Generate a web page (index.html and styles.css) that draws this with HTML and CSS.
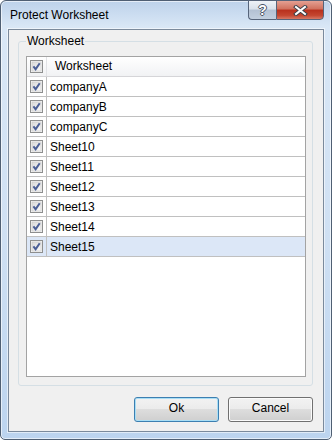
FILE: index.html
```html
<!DOCTYPE html>
<html>
<head>
  <meta charset="UTF-8" />
  <title>Protect Worksheet</title>
  <link rel="stylesheet" href="styles.css">
</head>
<body>
  <svg class="defs" width="0" height="0">
    <defs>
      <linearGradient id="box-fill" x1="0" y1="0" x2="1" y2="1">
        <stop offset="0" stop-color="#d9d9d9" />
        <stop offset="1" stop-color="#fbfbfb" />
      </linearGradient>
      <symbol id="check" viewBox="0 0 13 13">
        <rect x="0.5" y="0.5" width="12" height="12" fill="#f4f4f4" stroke="#8e8f8f" />
        <rect x="2" y="2" width="9" height="9" fill="url(#box-fill)" stroke="#c6c6c6" stroke-width="0.6" />
        <path d="M3.4 6.4 L5.6 9.2 L9.7 3.2" fill="none" stroke="#4a5e96" stroke-width="2" />
      </symbol>
    </defs>
  </svg>

  <div class="window">
    <div class="titlebar">
      <span class="title">Protect Worksheet</span>
      <div class="caption-buttons">
        <span class="cap-btn help">?</span>
        <span class="cap-btn close">
          <svg width="15" height="11" viewBox="0 0 15 11">
            <path d="M3 2 L12 9 M12 2 L3 9" stroke="#3a3f48" stroke-width="4" stroke-linecap="square" />
            <path d="M3 2 L12 9 M12 2 L3 9" stroke="#fff" stroke-width="2" stroke-linecap="square" />
          </svg>
        </span>
      </div>
    </div>

    <div class="client">
      <fieldset class="group">
        <legend>Worksheet</legend>
        <div class="grid">
          <div class="grid-header">
            <span class="cell-check"><svg class="checkbox"><use href="#check" /></svg></span>
            <span class="cell-name">Worksheet</span>
          </div>
          <div class="row">
            <span class="cell-check"><svg class="checkbox"><use href="#check" /></svg></span>
            <span class="cell-name">companyA</span>
          </div>
          <div class="row">
            <span class="cell-check"><svg class="checkbox"><use href="#check" /></svg></span>
            <span class="cell-name">companyB</span>
          </div>
          <div class="row">
            <span class="cell-check"><svg class="checkbox"><use href="#check" /></svg></span>
            <span class="cell-name">companyC</span>
          </div>
          <div class="row">
            <span class="cell-check"><svg class="checkbox"><use href="#check" /></svg></span>
            <span class="cell-name">Sheet10</span>
          </div>
          <div class="row">
            <span class="cell-check"><svg class="checkbox"><use href="#check" /></svg></span>
            <span class="cell-name">Sheet11</span>
          </div>
          <div class="row">
            <span class="cell-check"><svg class="checkbox"><use href="#check" /></svg></span>
            <span class="cell-name">Sheet12</span>
          </div>
          <div class="row">
            <span class="cell-check"><svg class="checkbox"><use href="#check" /></svg></span>
            <span class="cell-name">Sheet13</span>
          </div>
          <div class="row">
            <span class="cell-check"><svg class="checkbox"><use href="#check" /></svg></span>
            <span class="cell-name">Sheet14</span>
          </div>
          <div class="row selected">
            <span class="cell-check"><svg class="checkbox"><use href="#check" /></svg></span>
            <span class="cell-name">Sheet15</span>
          </div>
        </div>
      </fieldset>

      <div class="actions">
        <button class="btn default">Ok</button>
        <button class="btn">Cancel</button>
      </div>
    </div>
  </div>
</body>
</html>
```

FILE: styles.css
```css
* {
  box-sizing: border-box;
}
body {
  margin: 0;
  font-family: "Liberation Sans", Arial, sans-serif;
  font-size: 12px;
  color: #000;
  background: #fff;
}
.defs {
  position: absolute;
  width: 0;
  height: 0;
}

/* window frame */
.window {
  width: 332px;
  height: 440px;
  display: flex;
  flex-direction: column;
  padding: 0 7px 7px;
  border: 1px solid #4f5f73;
  border-radius: 6px 6px 5px 5px;
  background: linear-gradient(#bdd2ea 0, #d9e7f6 26px, #cfe0f3 55%, #bcd4ef 100%);
  box-shadow: inset 0 0 0 1px rgba(255, 255, 255, 0.6);
}
.titlebar {
  height: 28px;
  display: flex;
  align-items: flex-start;
  justify-content: space-between;
}
.title {
  padding: 6px 0 0 2px;
  line-height: 16px;
}
.caption-buttons {
  display: flex;
  margin-top: -1px;
}
.cap-btn {
  height: 20px;
  display: flex;
  align-items: center;
  justify-content: center;
  border: 1px solid #56647a;
}
.help {
  width: 28px;
  border-right: 0;
  border-radius: 0 0 0 4px;
  background: linear-gradient(#eef2f7 0, #d9e1eb 45%, #b3c1d3 50%, #c2cfdf 100%);
  color: #fff;
  font-weight: bold;
  font-size: 14px;
  line-height: 14px;
  text-shadow: 1px 0 0 #4b5566, -1px 0 0 #4b5566, 0 1px 0 #4b5566, 0 -1px 0 #4b5566;
}
.close {
  width: 48px;
  border-radius: 0 0 4px 0;
  background: linear-gradient(#e4a092 0, #d0705d 45%, #b8301d 50%, #c44630 80%, #d67865 100%);
}

/* client area */
.client {
  flex: 1;
  display: flex;
  flex-direction: column;
  background: #f0f0f0;
  border: 1px solid #7b8a9c;
  box-shadow: 0 0 0 1px rgba(255, 255, 255, 0.55);
}
.group {
  margin: 4px 10px 0 9px;
  padding: 7px 6px 8px 7px;
  border: 1px solid #d5dfe5;
  border-radius: 3px;
  min-width: 0;
}
.group legend {
  padding: 0 1px;
  line-height: 15px;
}

/* checked list */
.grid {
  height: 321px;
  border: 1px solid #a3a3a3;
  background: #fff;
}
.grid-header,
.row {
  display: flex;
  height: 20px;
}
.grid-header {
  border-bottom: 1px solid #d5d5d8;
  background: linear-gradient(#ffffff, #f1f2f4);
}
.row {
  border-bottom: 1px solid #c0c0c0;
}
.row.selected {
  background: #dce7f7;
}
.cell-check {
  width: 20px;
  display: flex;
  align-items: center;
  padding-left: 3px;
  border-right: 1px solid #c0c0c0;
}
.grid-header .cell-check {
  border-right-color: #e2e3e6;
}
.checkbox {
  width: 13px;
  height: 13px;
  display: block;
}
.cell-name {
  padding: 1px 0 0 3px;
  line-height: 18px;
}
.grid-header .cell-name {
  padding: 0 0 0 8px;
  line-height: 19px;
}

/* buttons */
.actions {
  display: flex;
  justify-content: flex-end;
  gap: 9px;
  margin: 11px 10px 0 0;
}
.btn {
  width: 85px;
  height: 25px;
  padding: 0 0 3px;
  font: 12px "Liberation Sans", Arial, sans-serif;
  color: #000;
  border: 1px solid #707070;
  border-radius: 3px;
  background: linear-gradient(#f2f2f2 0, #ebebeb 50%, #dddddd 50%, #cfcfcf 100%);
  box-shadow: inset 0 0 0 1px #fbfbfb;
}
.btn.default {
  border-color: #3c7fb1;
  box-shadow: inset 0 0 0 1px #a9def5;
}
```
